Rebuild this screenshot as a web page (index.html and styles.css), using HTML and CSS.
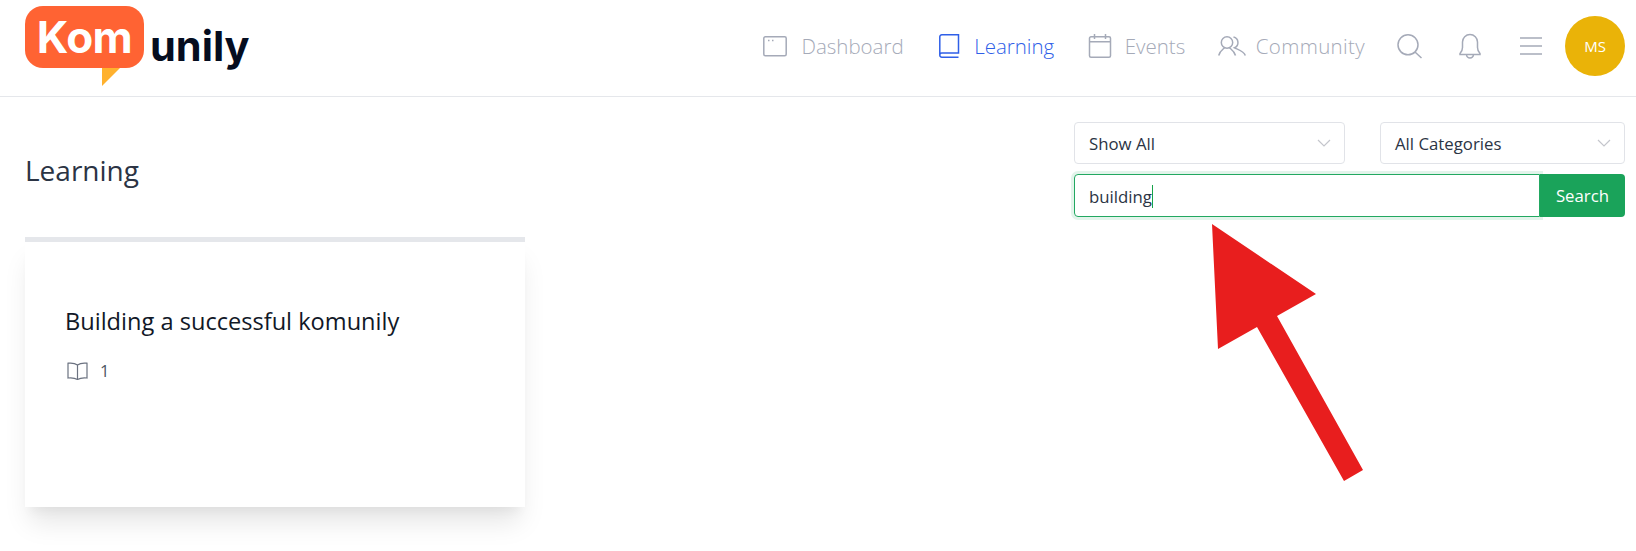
FILE: index.html
```html
<!DOCTYPE html>
<html lang="en">
<head>
  <meta charset="UTF-8">
  <title>Learning - Komunily</title>
  <link rel="stylesheet" href="styles.css">
</head>
<body>

  <header class="topbar">
    <a class="logo" href="#">
      <span class="logo-bubble">Kom</span>
      <span class="logo-rest">unily</span>
    </a>
    <nav class="nav">
      <a class="nav-link" href="#">
        <svg class="icon" viewBox="0 0 24 24"><rect x="0.800" y="2.800" width="22.400" height="18.900" rx="1.500"/><path d="M5 6.500h1.500M9 6.500h1.500"/></svg>
        Dashboard
      </a>
      <a class="nav-link active" href="#">
        <svg class="icon" viewBox="0 0 24 24"><path d="M3.800 21V3A2 2 0 0 1 5.800 .8H22.500V19H5.800A2 2 0 0 0 3.800 21A2 2 0 0 0 5.800 23.200H22.500"/></svg>
        Learning
      </a>
      <a class="nav-link" href="#">
        <svg class="icon" viewBox="0 0 24 24"><rect x="2.500" y="2.800" width="21" height="20.400" rx="1.500"/><path d="M2.500 7.800h21M7.500 0v5M18.500 0v5"/></svg>
        Events
      </a>
      <a class="nav-link nav-link-wide" href="#">
        <svg class="icon icon-wide" viewBox="0 0 28 20"><circle cx="9" cy="6.500" r="5.700"/><path d="M0.700 19.500C1.500 15.500 4 14 6.500 11.800M11.500 11.800C14 14 16.500 15.500 17.500 19.500M15.500 1A5.700 5.700 0 0 1 16.500 11.800C20 13.500 26 15 27.300 19.500"/></svg>
        Community
      </a>
      <a class="nav-btn" href="#">
        <svg class="icon" viewBox="0 0 24 24"><circle cx="11" cy="10.800" r="10"/><path d="M18 18L24.500 24"/></svg>
      </a>
      <a class="nav-btn" href="#">
        <svg class="icon" viewBox="0 0 24 24"><path d="M2 19.500c2-2 2.500-3.500 2.500-6V8a7.500 7.500 0 0 1 15 0v5.500c0 2.500.5 4 2.500 6v1H2zM8.500 20.500a3.500 3.500 0 0 0 7 0"/></svg>
      </a>
      <a class="nav-btn nav-btn-last" href="#">
        <svg class="icon" viewBox="0 0 24 24"><path d="M1 4h22M1 12h22M1 20h22"/></svg>
      </a>
      <span class="avatar">MS</span>
    </nav>
  </header>

  <main class="content">
    <div class="page-head">
      <h1 class="page-title">Learning</h1>
      <div class="filters">
        <div class="select-row">
          <div class="select select-show">Show All
            <svg class="chevron" viewBox="0 0 14 8"><path d="M1 1l6 6 6-6"/></svg>
          </div>
          <div class="select select-cat">All Categories
            <svg class="chevron" viewBox="0 0 14 8"><path d="M1 1l6 6 6-6"/></svg>
          </div>
        </div>
        <div class="search-row">
          <div class="search-input">building<span class="caret"></span></div>
          <button class="search-btn">Search</button>
        </div>
      </div>
    </div>

    <div class="course-card">
      <h3 class="course-title">Building a successful komunily</h3>
      <div class="course-meta">
        <svg class="meta-icon" viewBox="0 0 21 18"><path d="M10.500 3C8.500 1.500 4.500 .8 1 1.200V16c3.500-.4 7 0 9.500 1.500C13 16 16.500 15.600 20 16V1.200C16.500 .8 12.500 1.500 10.500 3zM10.500 3v14.500"/></svg>
        <span>1</span>
      </div>
    </div>
  </main>

  <svg class="arrow" viewBox="0 0 1636 551">
    <polygon points="1212,224 1316,294 1277,316 1363,470 1344,481 1257,327 1218,349"/>
  </svg>

</body>
</html>
```

FILE: styles.css
```css
* {
  box-sizing: border-box;
}

html, body {
  height: 100%;
}

body {
  margin: 0;
  background: #fff;
  font-family: 'Open Sans', sans-serif;
  color: #1f2937;
}

a {
  text-decoration: none;
}

.topbar {
  height: 97px;
  border-bottom: 1px solid #e5e7eb;
  display: flex;
  justify-content: space-between;
  align-items: flex-start;
  padding: 6px 11px 0 25px;
}

.logo {
  display: flex;
  align-items: flex-start;
  font-family: 'Inter', sans-serif;
  font-weight: 700;
}

.logo-bubble {
  display: block;
  width: 119px;
  height: 62px;
  background: #ff6333;
  border-radius: 18px;
  color: #fff;
  font-size: 44px;
  line-height: 63px;
  text-align: center;
  letter-spacing: -0.500px;
  position: relative;
}

.logo-bubble::after {
  content: "";
  position: absolute;
  left: 77px;
  top: 62px;
  border-top: 18px solid #ffb12e;
  border-right: 18px solid transparent;
}

.logo-rest {
  color: #050d1f;
  font-size: 41.500px;
  line-height: 48px;
  margin: 16px 0 0 6px;
}

.nav {
  display: flex;
  align-items: center;
  height: 60px;
  margin-top: 10px;
}

.nav-link {
  display: flex;
  align-items: center;
  gap: 14px;
  color: #a5aab8;
  font-size: 20.500px;
  font-weight: 300;
  margin-right: 32.500px;
}

.nav-link.active {
  color: #2f5fe8;
}

.nav-link-wide {
  gap: 10px;
  letter-spacing: 0.350px;
  margin-right: 32px;
}

.icon {
  width: 24px;
  height: 24px;
  fill: none;
  stroke: currentColor;
  stroke-width: 1.500;
  display: block;
  overflow: visible;
}

.icon-wide {
  width: 28px;
  height: 20px;
}

.nav-btn {
  color: #a5aab8;
  margin-right: 37px;
}

.nav-btn-last {
  margin-right: 22px;
}

.avatar {
  width: 60px;
  height: 60px;
  border-radius: 50%;
  background: #eab308;
  color: #fff;
  font-size: 15px;
  display: flex;
  align-items: center;
  justify-content: center;
}

.content {
  padding: 25px 11px 0 25px;
}

.page-head {
  display: flex;
  justify-content: space-between;
  align-items: flex-start;
}

.page-title {
  margin: 30px 0 0;
  font-size: 28px;
  font-weight: 400;
  line-height: 36px;
  color: #2b3444;
}

.filters {
  width: 551px;
}

.select-row {
  display: flex;
  justify-content: space-between;
}

.select {
  height: 42px;
  border: 1px solid #e1e3e8;
  border-radius: 4px;
  display: flex;
  align-items: center;
  justify-content: space-between;
  padding: 0 13px 0 14px;
  font-size: 16.800px;
  color: #2b3444;
}

.select-show {
  width: 271px;
}

.select-cat {
  width: 245px;
}

.chevron {
  width: 14px;
  height: 8px;
  fill: none;
  stroke: #c4c6cc;
  stroke-width: 1.200;
}

.search-row {
  display: flex;
  margin-top: 10px;
  height: 43px;
}

.search-input {
  flex: 1;
  border: 1px solid #22a861;
  border-radius: 4px 0 0 4px;
  box-shadow: 0 0 0 3px rgba(26, 163, 90, 0.12);
  padding: 1px 14px 0;
  font-size: 16.800px;
  color: #2b3444;
  display: flex;
  align-items: center;
}

.caret {
  width: 1px;
  height: 23px;
  background: #16a34a;
}

.search-btn {
  width: 85px;
  background: #1aa35a;
  color: #fff;
  border: none;
  border-radius: 0 4px 4px 0;
  font-family: inherit;
  font-size: 16.800px;
  padding: 0;
  position: relative;
}

.course-card {
  width: 500px;
  height: 270px;
  margin-top: 20px;
  border-top: 5px solid #e5e7eb;
  background: #fff;
  box-shadow: 0 20px 25px -5px rgba(0, 0, 0, 0.1), 0 10px 10px -5px rgba(0, 0, 0, 0.04);
  padding: 63px 40px 0;
}

.course-title {
  margin: 0;
  font-size: 23.600px;
  font-weight: 400;
  line-height: 32px;
  color: #111827;
}

.course-meta {
  display: flex;
  align-items: center;
  gap: 12px;
  margin-top: 22px;
  font-size: 16.500px;
  color: #4b5563;
}

.meta-icon {
  width: 21px;
  height: 18px;
  margin-left: 2px;
  fill: none;
  stroke: #6b7280;
  stroke-width: 1.200;
}

.arrow {
  position: absolute;
  left: 0;
  top: 0;
  width: 1636px;
  height: 551px;
  pointer-events: none;
}

.arrow polygon {
  fill: #e81e1e;
}
```
